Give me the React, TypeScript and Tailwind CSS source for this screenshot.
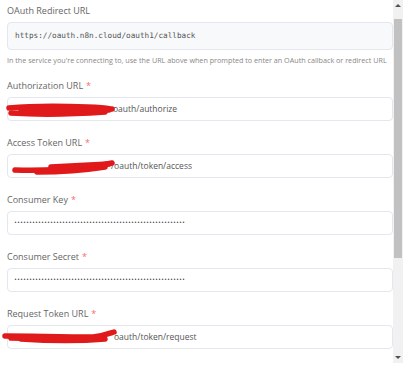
import React from "react";

type Field = {
  label: string;
  value?: string;
  secret?: boolean;
  offset?: number;
  scribble?: string[];
};

const fields: Field[] = [
  {
    label: "Authorization URL",
    value: "oauth/authorize",
    offset: 105,
    scribble: [
      "M 8 10 C 30 8, 60 8, 86 9 S 106 11, 111 11",
      "M 10 15 C 40 17, 75 16, 104 14",
      "M 20 12 C 50 13, 80 12, 108 12",
    ],
  },
  {
    label: "Access Token URL",
    value: "/oauth/token/access",
    offset: 103,
    scribble: [
      "M 14 15 C 40 16, 70 14, 95 11 L 111 8",
      "M 36 17 C 60 17, 85 15, 104 12",
      "M 50 12 C 70 11, 90 10, 108 9",
    ],
  },
  { label: "Consumer Key", secret: true },
  { label: "Consumer Secret", secret: true },
  {
    label: "Request Token URL",
    value: "oauth/token/request",
    offset: 106,
    scribble: [
      "M 4 10 C 30 10, 60 11, 92 11 C 102 10, 107 8, 113 6",
      "M 20 13 C 50 15, 80 15, 104 13",
      "M 10 12 C 40 13, 70 13, 100 12",
    ],
  },
];

const dots = "•".repeat(57);

function Scrollbar() {
  return (
    <div className="flex h-[363px] w-[10px] flex-col items-center bg-[#f1f1f1]">
      <div className="mt-[4px] h-0 w-0 border-x-[3px] border-b-[3px] border-x-transparent border-b-[#505050]" />
      <div className="mt-[12px] h-[239px] w-[8px] bg-[#c1c1c1]" />
      <div className="mt-auto mb-[4px] h-0 w-0 border-x-[3px] border-t-[3px] border-x-transparent border-t-[#505050]" />
    </div>
  );
}

function Label({ text, required }: { text: string; required?: boolean }) {
  return (
    <div className="h-[12px] text-[9px] leading-[12px] text-[#666]">
      {text}
      {required && <span className="ml-[3px] text-[#f56c6c]">*</span>}
    </div>
  );
}

export default function App() {
  return (
    <div
      className="flex h-[375px] w-[403px] bg-white"
      style={{ fontFamily: '"Open Sans", "Liberation Sans", sans-serif' }}
    >
      <div className="flex w-[393px] flex-col pl-[7px] pt-[5px]">
        <Label text="OAuth Redirect URL" />
        <div className="mt-[5px] flex h-[28px] w-[386px] items-center rounded-[4px] border border-[#e4e7ed] bg-[#f7f9fb] pl-[7px]">
          <span
            className="text-[7.7px] text-[#555]"
            style={{ fontFamily: '"DejaVu Sans Mono", "Liberation Mono", monospace' }}
          >
            https://oauth.n8n.cloud/oauth1/callback
          </span>
        </div>
        <div className="mt-[5px] h-[10px] whitespace-nowrap text-[7.2px] leading-[10px] text-[#888]">
          In the service you're connecting to, use the URL above when prompted to enter an OAuth callback or redirect URL
        </div>

        {fields.map((f, i) => (
          <div key={f.label} className={i === 0 ? "mt-[15px]" : "mt-[16px]"}>
            <Label text={f.label} required />
            <div className="relative mt-[5px] flex h-[24px] w-[386px] items-center rounded-[4px] border border-[#e4e7ed] bg-white">
              {f.secret ? (
                <span
                  className="pl-[6px] text-[5px] leading-none text-[#444]"
                  style={{ fontFamily: '"Liberation Mono", monospace' }}
                >
                  {dots}
                </span>
              ) : (
                <span className="text-[8.5px] text-[#555]" style={{ paddingLeft: f.offset }}>
                  {f.value}
                </span>
              )}
              {f.scribble && (
                <svg
                  className="pointer-events-none absolute left-[-7px] top-0 overflow-visible"
                  width="120"
                  height="24"
                  viewBox="0 0 120 24"
                >
                  {f.scribble.map((d) => (
                    <path
                      key={d}
                      d={d}
                      fill="none"
                      stroke="#e0191b"
                      strokeWidth="5.5"
                      strokeLinecap="round"
                      strokeLinejoin="round"
                    />
                  ))}
                </svg>
              )}
            </div>
          </div>
        ))}
      </div>
      <Scrollbar />
    </div>
  );
}
